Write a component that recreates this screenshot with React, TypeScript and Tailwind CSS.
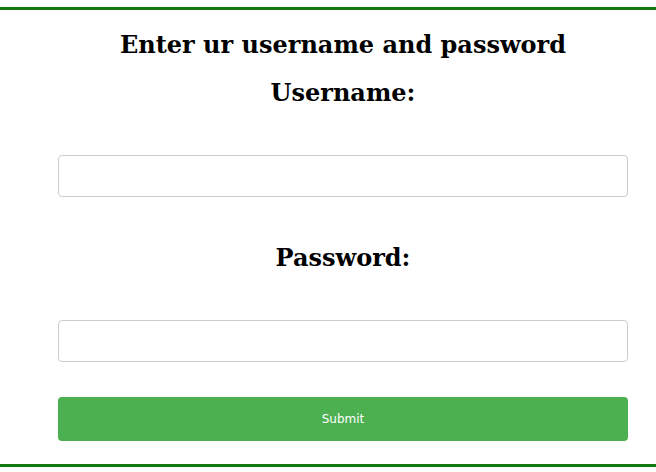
import React, {useState} from "react";

export default function App() {
    const [username, setUsername] = useState<string>("");
    const [password, setPassword] = useState<string>("");

    const headingClass = "text-center text-[24px] leading-[28px] font-bold text-black";

    return (
        <div className="pt-[7px] bg-white min-h-[472px]">
            <form
                onSubmit={(e) => e.preventDefault()}
                className="border-y-[3px] border-[#137a13] pt-[21px] pb-[23px] pl-[58px] pr-[28px]"
                style={{fontFamily: '"DejaVu Serif", serif'}}
            >
                <h2 className={headingClass}>Enter ur username and password</h2>
                <h3 className={`${headingClass} mt-[20px]`}>Username:</h3>
                <input
                    type="text"
                    value={username}
                    onChange={(e) => setUsername(e.target.value)}
                    className="mt-[48px] block w-full h-[42px] border border-[#cccccc] rounded-[4px] px-3 outline-none"
                />
                <h3 className={`${headingClass} mt-[47px]`}>Password:</h3>
                <input
                    type="password"
                    value={password}
                    onChange={(e) => setPassword(e.target.value)}
                    className="mt-[48px] block w-full h-[42px] border border-[#cccccc] rounded-[4px] px-3 outline-none"
                />
                <button
                    type="submit"
                    className="mt-[35px] block w-full h-[44px] bg-[#4caf50] text-white text-[12px] rounded-[4px] font-['DejaVu_Sans',sans-serif]"
                >
                    Submit
                </button>
            </form>
        </div>
    );
}
